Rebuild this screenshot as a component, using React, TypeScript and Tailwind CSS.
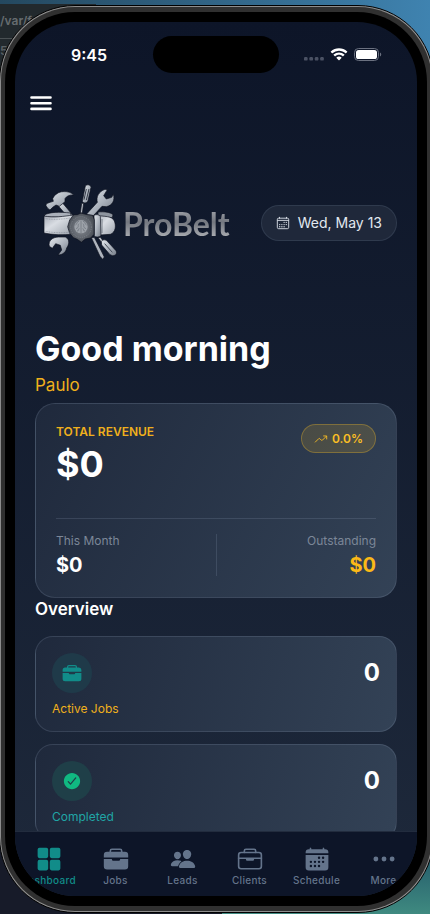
import type { ReactNode } from "react";
import {
  IoBriefcase,
  IoBriefcaseOutline,
  IoCalendar,
  IoCalendarOutline,
  IoCheckmarkCircle,
  IoEllipsisHorizontal,
  IoGrid,
  IoPeople,
  IoTrendingUp,
} from "react-icons/io5";

interface NavItem {
  label: string;
  icon: ReactNode;
  active?: boolean;
}

interface StatCardProps {
  label: string;
  value: number;
  icon: ReactNode;
  iconClass: string;
  labelClass: string;
}

const navItems: NavItem[] = [
  { label: "Dashboard", icon: <IoGrid size={26} />, active: true },
  { label: "Jobs", icon: <IoBriefcase size={26} /> },
  { label: "Leads", icon: <IoPeople size={26} /> },
  { label: "Clients", icon: <IoBriefcaseOutline size={26} /> },
  { label: "Schedule", icon: <IoCalendar size={26} /> },
  { label: "More", icon: <IoEllipsisHorizontal size={26} /> },
];

const ToolBeltMark = () => (
  <svg viewBox="36 36 228 234" className="h-[78px] w-[76px]" aria-hidden="true">
    <defs>
      <linearGradient id="steel" x1="0" y1="0" x2="1" y2="1">
        <stop offset="0" stopColor="#e4e8ed" />
        <stop offset="0.55" stopColor="#aab1bb" />
        <stop offset="1" stopColor="#737a85" />
      </linearGradient>
      <linearGradient id="strap" x1="0" y1="0" x2="1" y2="1">
        <stop offset="0" stopColor="#a3a9b3" />
        <stop offset="0.4" stopColor="#d9dde3" />
        <stop offset="1" stopColor="#9aa1ab" />
      </linearGradient>
      <radialGradient id="buckle">
        <stop offset="0" stopColor="#8d9197" />
        <stop offset="0.6" stopColor="#666b73" />
        <stop offset="1" stopColor="#4b5058" />
      </radialGradient>
    </defs>
    <g stroke="#0a0f1c" strokeWidth="2" strokeLinejoin="round">
      {/* hammer */}
      <path d="M82 101 96 94 130 134 114 139Z" fill="url(#steel)" />
      <path
        d="M49 98 60 94 70 91 68 83C74 70 86 62 100 62 112 61 124 64 131 72 118 71 109 76 105 83L105 92 88 106 78 102 68 109 60 117 54 113 48 104Z"
        fill="url(#steel)"
      />
      {/* screwdriver, top */}
      <path d="M155 97 161 97 157 126 151 126Z" fill="#b9bec6" />
      <path
        d="M166 45C171 39 182 41 183 49L174 90C171 97 160 98 157 91Z"
        fill="url(#steel)"
      />
      <path d="M169 54 162 86M177 54 169 87" stroke="#353b47" strokeWidth="3" />
      {/* wrench, top */}
      <path
        d="M168 131 202 94C198 77 206 62 225 55L232 56 221 74 229 84 245 79 250 70C256 87 247 104 229 107L216 106 190 134Z"
        fill="url(#steel)"
      />
      {/* wrench, bottom */}
      <path
        d="M58 226C54 210 66 199 85 198L106 198C121 205 117 222 110 231 108 243 98 252 84 252L95 237 91 223 77 218 67 232Z"
        fill="url(#steel)"
      />
      {/* screwdrivers, bottom */}
      <path d="M184 200 193 199 213 238 223 258 218 265 210 256Z" fill="#aeb4bd" />
      <path d="M204 200 211 199 224 215 219 220Z" fill="#c6cad1" />
      <path
        d="M214 211C219 205 227 205 232 211L258 239C263 248 256 255 247 254L240 251 215 222Z"
        fill="url(#steel)"
      />
      <path d="M224 218 247 244" stroke="#454c58" strokeWidth="3" />
      {/* belt */}
      <path d="M43 132C58 123 89 122 121 126L126 139 45 138Z" fill="#aab0ba" />
      <path d="M204 123C223 121 242 124 249 131L247 140 204 137Z" fill="#8e959f" />
      <path d="M42 135C71 141 101 136 130 132L130 190C100 192 68 192 42 186Z" fill="url(#strap)" />
      <path d="M199 133C222 137 246 134 253 150 259 165 257 184 241 190L199 193Z" fill="url(#strap)" />
      <path d="M192 133C199 129 207 131 211 136L213 194C207 199 199 199 193 196Z" fill="url(#steel)" />
      <path d="M216 144V186" stroke="#4d5460" />
      {/* buckle */}
      <path
        d="M131 131 142 131 153 126 167 130 188 133 193 147 192 190 182 201 166 204 154 214 142 205 130 200 119 187 113 167 119 147Z"
        fill="url(#buckle)"
      />
    </g>
    <path d="M47 143C73 147 100 144 122 141M47 181C73 186 99 186 120 184" fill="none" stroke="#727985" strokeWidth="1.5" strokeDasharray="3 2" />
    <circle cx="153" cy="168" r="31" fill="none" stroke="#8b9098" strokeWidth="3" strokeDasharray="2 4" />
    <circle cx="153" cy="167" r="20" fill="#9da2a9" />
    <path
      d="M153 149V186M147 151C138 151 143 161 136 162M147 158C141 164 150 168 138 173M148 172C143 174 149 180 141 180M159 151C168 151 163 161 170 162M159 158C165 164 156 168 168 173M158 172C163 174 157 180 165 180"
      fill="none"
      stroke="#6a7079"
      strokeWidth="2"
    />
  </svg>
);

const StatusBar = () => (
  <div className="grid grid-cols-3 items-center px-1 pt-[14px]">
    <span className="pl-[52px] text-base leading-5 font-semibold">9:45</span>
    <div className="h-[37px] w-[126px] justify-self-center rounded-full bg-black" />
    <div className="flex items-center justify-end gap-[6px] pr-[31px]">
      <svg viewBox="0 0 20 4" className="mt-2 h-1 w-5" aria-hidden="true">
        <g fill="#4a5163">
          <rect width="3.6" height="3.6" rx="1.2" />
          <rect x="5.4" width="3.6" height="3.6" rx="1.2" />
          <rect x="10.8" width="3.6" height="3.6" rx="1.2" />
          <rect x="16.2" width="3.6" height="3.6" rx="1.2" />
        </g>
      </svg>
      <svg viewBox="0 0 17 12.5" className="h-[13px] w-[18px]" aria-hidden="true">
        <path
          fill="#fff"
          d="M8.5 2.6c2.4 0 4.6.9 6.3 2.5.1.1.3.1.4 0l1.2-1.2c.1-.1.1-.3 0-.5a11.5 11.5 0 0 0-15.8 0c-.1.1-.1.3 0 .5l1.2 1.2c.1.1.3.1.4 0a9 9 0 0 1 6.3-2.5Zm0 4c1.3 0 2.6.5 3.5 1.4.2.1.3.1.5 0l1.2-1.3c.1-.1.1-.3 0-.4a7.6 7.6 0 0 0-10.4 0c-.1.1-.1.3 0 .4l1.2 1.3c.2.1.3.1.5 0 .9-.9 2.2-1.4 3.5-1.4Zm2.4 2.9c.1-.1.1-.3 0-.4a3.7 3.7 0 0 0-4.8 0c-.1.1-.1.3 0 .4l2.1 2.2c.2.1.4.1.6 0Z"
        />
      </svg>
      <svg viewBox="0 0 28 13" className="h-[13px] w-7" aria-hidden="true">
        <rect x=".5" y=".5" width="24" height="12" rx="4" fill="none" stroke="#6b7180" />
        <rect x="2" y="2" width="21" height="9" rx="2.6" fill="#fff" />
        <path d="M26 4.5c1.7.8 1.7 3.2 0 4Z" fill="#6b7180" />
      </svg>
    </div>
  </div>
);

const StatCard = ({ label, value, icon, iconClass, labelClass }: StatCardProps) => (
  <div className="rounded-[18px] border border-slate-400/20 bg-linear-[105deg] from-[#1f293c] to-[#334256] px-4 pt-4 pb-[14px]">
    <div className="flex items-center justify-between">
      <div className={`flex size-10 items-center justify-center rounded-full ${iconClass}`}>
        {icon}
      </div>
      <span className="text-2xl font-bold">{value}</span>
    </div>
    <p className={`mt-2 text-xs leading-4 ${labelClass}`}>{label}</p>
  </div>
);

const RevenueCard = () => (
  <section className="rounded-[20px] border border-slate-400/20 bg-linear-[118deg] from-[#1f293c] to-[#334256] p-5">
    <div className="flex items-start justify-between">
      <div>
        <h2 className="text-xs leading-4 font-semibold text-[#f0b01c]">TOTAL REVENUE</h2>
        <p className="mt-1 text-4xl leading-10 font-bold">$0</p>
      </div>
      <div className="flex h-[29px] items-center gap-1 rounded-full border border-[#fbbf24]/30 bg-[#fbbf24]/15 px-3 text-xs font-semibold text-[#fbbf24]">
        <IoTrendingUp size={14} />
        0.0%
      </div>
    </div>
    <div className="mt-[34px] flex items-center justify-between border-t border-slate-400/20 pt-[14px]">
      <div className="flex-1">
        <p className="text-xs leading-4 text-[#7c8798]">This Month</p>
        <p className="mt-1 text-xl leading-6 font-bold">$0</p>
      </div>
      <div className="h-[42px] w-px bg-slate-400/20" />
      <div className="flex-1 text-right">
        <p className="text-xs leading-4 text-[#7c8798]">Outstanding</p>
        <p className="mt-1 text-xl leading-6 font-bold text-[#fbb917]">$0</p>
      </div>
    </div>
  </section>
);

const BottomNav = () => (
  <nav className="grid grid-cols-6 border-t border-[#222c3e] bg-[#0d1528] pt-[14px] pb-2">
    {navItems.map((item) => (
      <a
        key={item.label}
        href="#"
        className={`flex flex-col items-center text-[10px] leading-4 font-medium tracking-[0.3px] ${item.active ? "text-[#118c89]" : "text-[#64748b]"}`}
      >
        {item.icon}
        <span>{item.label}</span>
      </a>
    ))}
  </nav>
);

const Desktop = () => (
  <div className="absolute inset-0 bg-linear-to-r from-[#24485f] to-[#3f83b0]" aria-hidden="true">
    <div className="absolute top-1 left-0 h-24 w-24 bg-[#22292d] font-semibold">
      <p className="border-b border-[#4a5053] pt-2 pb-2 text-[12px] leading-[18px] text-[#666c6f]">/var/f</p>
      <p className="pt-1 text-[12px] leading-4 text-[#5c6265]">59</p>
    </div>
    <div className="absolute bottom-0 left-0 h-24 w-56 bg-[#171b29]" />
    <div className="absolute right-0 bottom-0 h-24 w-52 bg-linear-to-b from-[#173f5c] to-[#3f8a80]" />
  </div>
);

const App = () => {
  return (
    <div className="relative flex h-screen flex-col overflow-hidden pt-[5px] pb-px font-['Inter',sans-serif] text-white">
      <Desktop />
      <div className="relative -mr-1 -ml-px flex min-h-0 flex-1 flex-col rounded-[76px] border border-black bg-[#8d8d8d] p-px">
        <div className="flex min-h-0 flex-1 flex-col rounded-[74px] bg-[#303030] p-[5px] pl-[4px]">
          <div className="flex min-h-0 flex-1 flex-col rounded-[70px] bg-black p-[10px]">
            <div className="flex min-h-0 flex-1 flex-col overflow-hidden rounded-[60px] bg-linear-to-b from-[#0d1528] to-[#1e293b]">
              <StatusBar />
              <header className="px-[15px] pt-4">
                <button type="button" aria-label="Open menu" className="block">
                  <svg viewBox="0 0 22 28" className="h-7 w-[22px]" stroke="#fff" strokeWidth="2.6" strokeLinecap="round" aria-hidden="true">
                    <path d="M1.5 8.5h19M1.5 14.2h19M1.5 19.9h19" />
                  </svg>
                </button>
              </header>
              <main className="min-h-0 flex-1 overflow-hidden px-5 pt-[66px]">
                <div className="flex items-center justify-between">
                  <div className="flex items-center gap-[5px] pl-[7px]">
                    <ToolBeltMark />
                    <span className="bg-linear-to-b from-[#c2c4c9] via-[#73777f] to-[#c4c6ca] bg-clip-text pt-1 font-['Lato',sans-serif] text-[32px] leading-10 font-bold text-transparent">
                      ProBelt
                    </span>
                  </div>
                  <div className="mt-[2px] flex h-[36px] items-center gap-2 rounded-full border border-slate-400/15 bg-[#1f283a] px-[14px] text-sm text-[#e2e8f0]">
                    <IoCalendarOutline size={14} />
                    Wed, May 13
                  </div>
                </div>
                <h1 className="mt-[66px] text-[34px] leading-[44px] font-bold">Good morning</h1>
                <p className="mt-[2px] mb-[6px] text-[17px] leading-6 text-[#f0b01c]">Paulo</p>
                <RevenueCard />
                <h2 className="text-[17px] leading-[22px] font-semibold">Overview</h2>
                <div className="mt-4 flex flex-col gap-3">
                  <StatCard
                    label="Active Jobs"
                    value={0}
                    icon={<IoBriefcase size={20} />}
                    iconClass="bg-[#1f3a49] text-[#118c89]"
                    labelClass="text-[#f0b01c]"
                  />
                  <StatCard
                    label="Completed"
                    value={0}
                    icon={<IoCheckmarkCircle size={20} />}
                    iconClass="bg-[#1f3f48] text-[#10b981]"
                    labelClass="text-[#20a5a5]"
                  />
                </div>
              </main>
              <BottomNav />
            </div>
          </div>
        </div>
      </div>
    </div>
  );
};

export default App;
